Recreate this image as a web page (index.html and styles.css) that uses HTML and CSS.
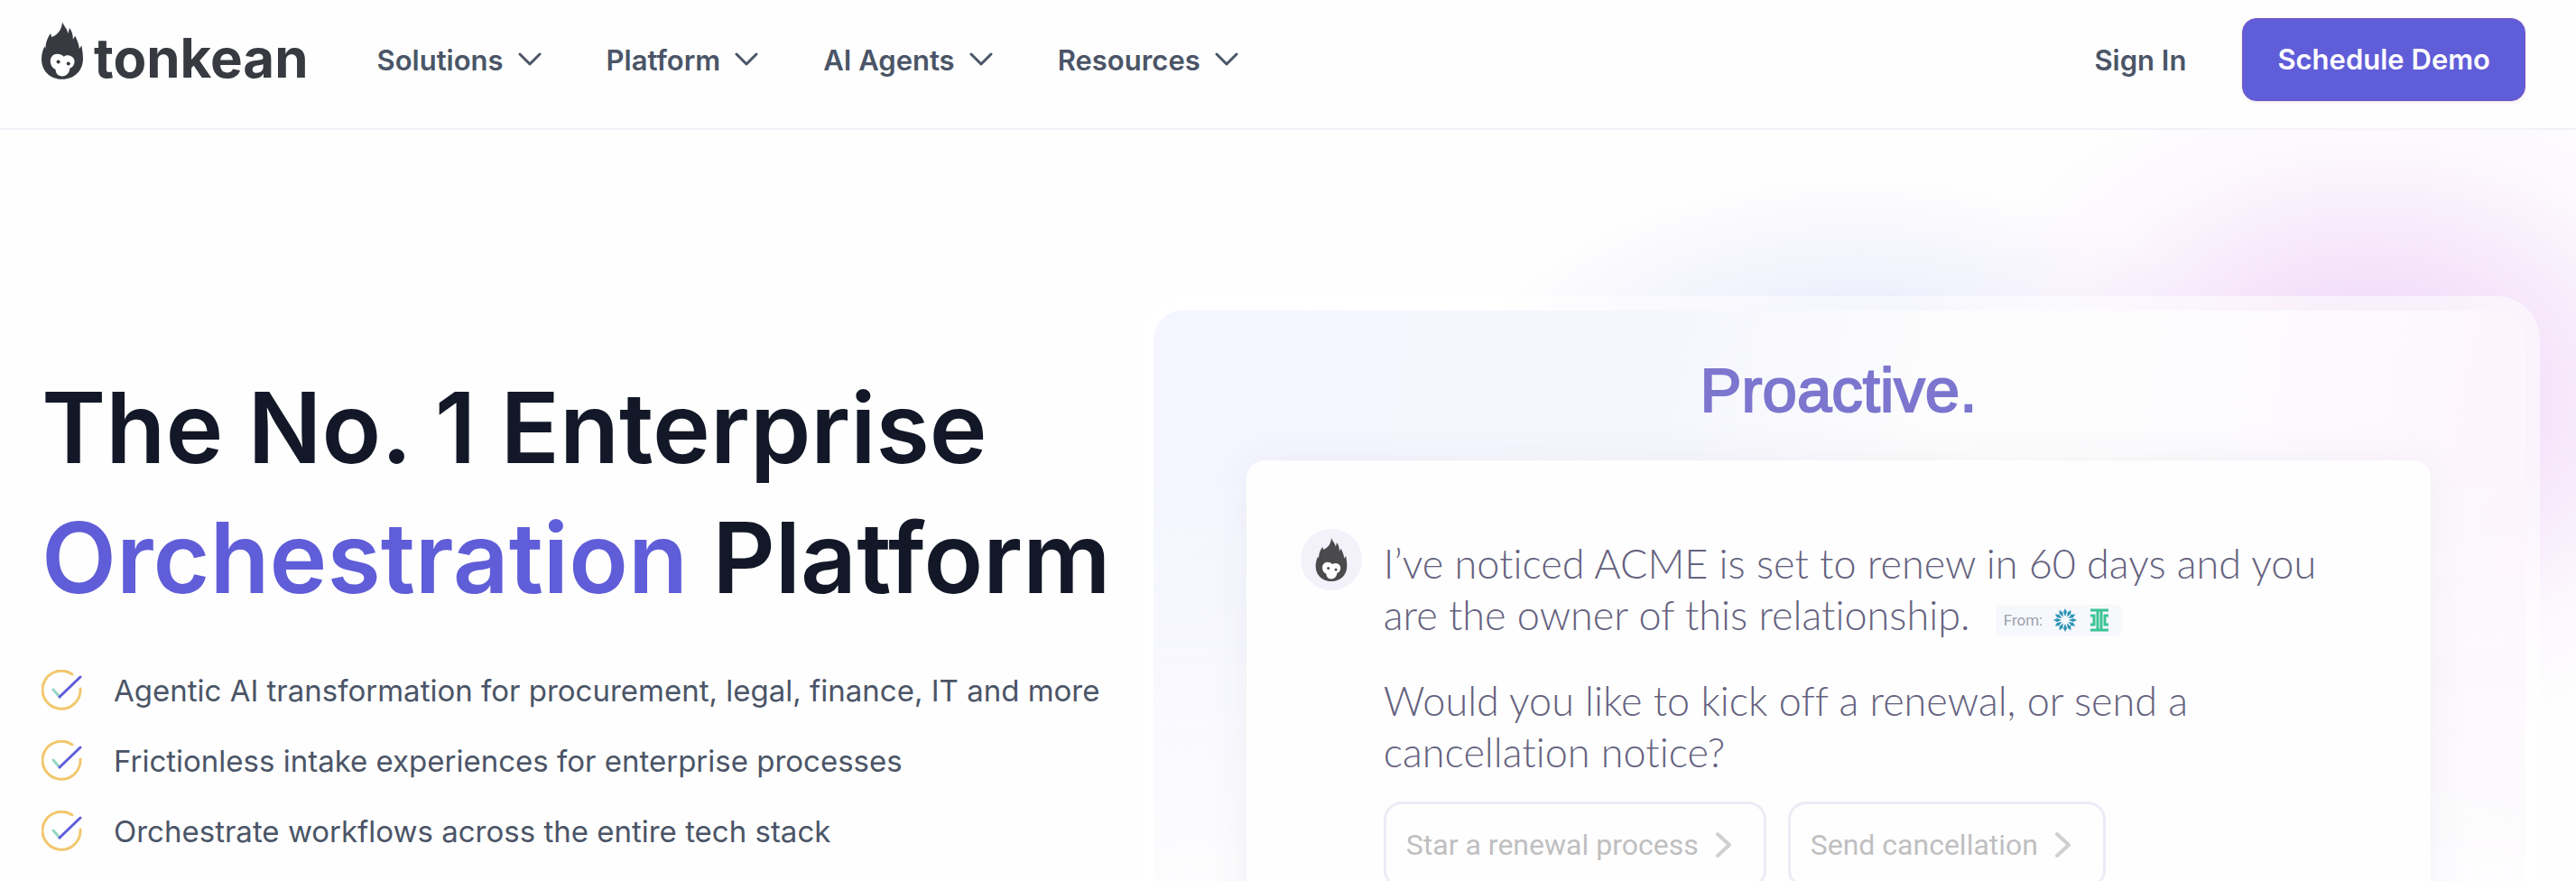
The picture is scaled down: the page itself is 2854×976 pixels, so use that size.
FILE: index.html
```
<!DOCTYPE html>
<html lang="en">
<head>
    <meta charset="UTF-8">
    <meta name="viewport" content="width=device-width, initial-scale=1.0">
    <title>Tonkean</title>
    <link rel="stylesheet" href="styles.css">
</head>
<body>
    <!-- Shared icons -->
    <svg class="sprite" aria-hidden="true">
        <symbol id="flame" viewBox="0 0 136 188">
            <path fill="currentColor" d="M68 0C72 12 83 20 87 38L92 20C99 30 104 44 103 58L110 46C116 58 122 72 124 88L132 77C132 90 136 98 136 120C136 160 108 188 68 188C28 188 0 160 0 122C0 104 5 92 10 80L13 88C14 66 20 52 30 38L33 50C44 46 52 40 60 28C66 18 67 10 68 0Z"/>
            <path fill="#fff" d="M52 105C62 105 69 109 73 114C79 110 84 109 90 110C102 112 109 121 108 132C107 143 101 150 93 152C91 168 82 178 68 178C54 178 46 168 46 156C36 152 29 142 29 129C29 115 38 105 52 105Z"/>
            <circle cx="55" cy="131" r="6" fill="currentColor"/>
            <circle cx="88" cy="137" r="6" fill="currentColor"/>
        </symbol>
        <symbol id="chevron-down" viewBox="0 0 26 16">
            <path d="M2 2L13 13L24 2" fill="none" stroke="currentColor" stroke-width="3" stroke-linecap="round" stroke-linejoin="round"/>
        </symbol>
        <symbol id="chevron-right" viewBox="0 0 20 30">
            <path d="M3 3L16 15L3 27" fill="none" stroke="currentColor" stroke-width="4" stroke-linecap="round" stroke-linejoin="round"/>
        </symbol>
        <symbol id="check" viewBox="0 0 46 46">
            <path d="M34 5A21 21 0 1 0 43 21" fill="none" stroke="#f2c76e" stroke-width="3" stroke-linecap="round"/>
            <path d="M13 22L20 30" fill="none" stroke="#94d6c8" stroke-width="3" stroke-linecap="round"/>
            <path d="M20 30L43 8" fill="none" stroke="#605dd8" stroke-width="3" stroke-linecap="round"/>
        </symbol>
    </svg>

    <header class="header">
        <a class="logo" href="#">
            <svg class="logo-mark"><use href="#flame"/></svg>
            <span class="logo-name">tonkean</span>
        </a>
        <nav class="nav">
            <button class="nav-item">Solutions <svg class="nav-arrow"><use href="#chevron-down"/></svg></button>
            <button class="nav-item">Platform <svg class="nav-arrow"><use href="#chevron-down"/></svg></button>
            <button class="nav-item">AI Agents <svg class="nav-arrow"><use href="#chevron-down"/></svg></button>
            <button class="nav-item">Resources <svg class="nav-arrow"><use href="#chevron-down"/></svg></button>
        </nav>
        <div class="actions">
            <a class="sign-in" href="#">Sign In</a>
            <a class="demo-button" href="#">Schedule Demo</a>
        </div>
    </header>

    <main class="hero">
        <section class="intro">
            <h1 class="title">The No. 1 Enterprise <span class="accent">Orchestration</span> Platform</h1>
            <ul class="benefits">
                <li class="benefit"><svg class="check"><use href="#check"/></svg>Agentic AI transformation for procurement, legal, finance, IT and more</li>
                <li class="benefit"><svg class="check"><use href="#check"/></svg>Frictionless intake experiences for enterprise processes</li>
                <li class="benefit"><svg class="check"><use href="#check"/></svg>Orchestrate workflows across the entire tech stack</li>
            </ul>
        </section>

        <section class="glass">
            <div class="demo">
                <h2 class="demo-title">Proactive.</h2>
                <div class="chat">
                    <div class="avatar"><svg class="avatar-mark"><use href="#flame"/></svg></div>
                    <div class="message">
                        <p class="line">I’ve noticed ACME is set to renew in 60 days and you<br>are the owner of this relationship.
                            <span class="source">From:
                                <svg class="source-icon" viewBox="0 0 26 26" fill="#2f93b5">
                                    <g id="rays">
                                        <path d="M13 9L11 4L13 0L15 4Z"/>
                                        <path d="M13 9L11 4L13 0L15 4Z" transform="rotate(90 13 13)"/>
                                        <path d="M13 9L11 4L13 0L15 4Z" transform="rotate(180 13 13)"/>
                                        <path d="M13 9L11 4L13 0L15 4Z" transform="rotate(270 13 13)"/>
                                    </g>
                                    <use href="#rays" transform="rotate(30 13 13)"/>
                                    <use href="#rays" transform="rotate(60 13 13)"/>
                                </svg>
                                <svg class="source-icon" viewBox="0 0 26 26">
                                    <path d="M3 2H23M3 24H23M11 2V24M15 2V24M3 8H7V18H3M23 8H19V18H23" fill="none" stroke="#3cc495" stroke-width="3"/>
                                </svg>
                            </span>
                        </p>
                        <p class="line">Would you like to kick off a renewal, or send a<br>cancellation notice?</p>
                        <div class="choices">
                            <button class="choice">Star a renewal process <svg class="choice-arrow"><use href="#chevron-right"/></svg></button>
                            <button class="choice">Send cancellation <svg class="choice-arrow"><use href="#chevron-right"/></svg></button>
                        </div>
                    </div>
                </div>
            </div>
        </section>
    </main>
</body>
</html>
```
FILE: styles.css
```
* {
    box-sizing: border-box;
}
body {
    margin: 0;
    height: 100vh;
    display: flex;
    flex-direction: column;
    overflow: hidden;
    background: #fefefe;
    color: #4b5567;
    font-family: Inter, sans-serif;
}
h1, h2, p, ul {
    margin: 0;
    padding: 0;
}
a {
    color: inherit;
    text-decoration: none;
}
button {
    background: none;
    border: none;
    padding: 0;
    color: inherit;
    font: inherit;
    cursor: pointer;
}
.sprite {
    display: none;
}

/* Header */
.header {
    display: flex;
    align-items: center;
    padding: 20px 56px 30px 46px;
    border-bottom: 2px solid #f1f1f8;
    font-size: 31px;
    font-weight: 600;
}
.logo {
    display: flex;
    align-self: flex-start;
    gap: 12px;
    margin-right: 76px;
    padding-top: 4px;
    color: #373a40;
}
.logo-mark {
    width: 46px;
    height: 64px;
}
.logo-name {
    padding-top: 8px;
    font-size: 60px;
    font-weight: 700;
    line-height: 64px;
}
.nav {
    display: flex;
    gap: 72px;
}
.nav-item {
    display: flex;
    align-items: center;
    gap: 16px;
}
.nav-arrow {
    width: 26px;
    height: 16px;
}
.actions {
    display: flex;
    align-items: center;
    gap: 62px;
    margin-left: auto;
}
.demo-button {
    padding: 0 38px;
    line-height: 90px;
    border: 1px solid #7a55c8;
    border-radius: 16px;
    background: #605dd8;
    box-shadow: 0 2px 4px rgba(16, 24, 40, 0.06);
    color: #fff;
}

/* Hero, with the two soft glows behind the card */
.hero {
    flex: 1;
    min-height: 0;
    display: grid;
    grid-template-columns: 47fr 60fr;
    align-items: start;
    padding: 184px 40px 0 46px;
    background:
        radial-gradient(480px 380px at 92% 300px, rgba(240, 214, 248, 0.9) 0%, rgba(240, 214, 248, 0.8) 30%, rgba(243, 220, 250, 0.5) 55%, rgba(250, 235, 252, 0.3) 75%, rgba(255, 255, 255, 0) 100%),
        radial-gradient(440px 260px at 72% 310px, #dfe2fa 0%, #e6e8fb 35%, rgba(238, 239, 252, 0.8) 55%, rgba(255, 255, 255, 0) 100%);
}
.intro {
    padding-top: 74px;
}
.title {
    color: #121827;
    font-size: 108px;
    font-weight: 600;
    line-height: 144px;
}
.accent {
    color: #605dd8;
}
.benefits {
    display: flex;
    flex-direction: column;
    gap: 24px;
    margin-top: 48px;
    list-style: none;
}
.benefit {
    display: flex;
    align-items: center;
    gap: 34px;
    font-size: 33px;
    line-height: 54px;
}
.check {
    width: 46px;
    height: 46px;
}

/* Product card */
.glass {
    padding: 16px;
    border-radius: 48px;
    background: rgba(255, 255, 255, 0.55);
}
.demo {
    padding: 50px 105px 120px 103px;
    border-radius: 32px;
    background:
        linear-gradient(to bottom, rgba(253, 253, 253, 0) 20%, #fdfdfe 80%),
        linear-gradient(100deg, #f4f5ff 0%, #f6f7fd 35%, #fdfdfd 55%, #fdfbfe 75%, #fcf3fb 100%);
}
.demo-title {
    color: #7c76cf;
    font-family: "Liberation Sans", sans-serif;
    font-size: 69px;
    font-weight: 400;
    line-height: 78px;
    text-align: center;
    -webkit-text-stroke: 2px #7c76cf;
}
.chat {
    display: flex;
    gap: 24px;
    margin-top: 38px;
    padding: 76px 60px 80px;
    border-radius: 20px;
    background: #fefefe;
    box-shadow: 0 0 48px rgba(60, 60, 100, 0.06);
}
.avatar {
    display: flex;
    flex: none;
    align-items: center;
    justify-content: center;
    width: 68px;
    height: 68px;
    border-radius: 50%;
    background: #f3f2fb;
    color: #4a4a4c;
}
.avatar-mark {
    width: 36px;
    height: 48px;
}
.message {
    padding-top: 10px;
    white-space: nowrap;
}
.line {
    margin-bottom: 38px;
    color: #65627f;
    font-family: Lato, sans-serif;
    font-size: 45px;
    font-weight: 300;
    font-variant-ligatures: no-common-ligatures;
    line-height: 57px;
}
.line:nth-of-type(2) {
    margin-bottom: 26px;
}
.source {
    display: inline-flex;
    align-items: center;
    gap: 12px;
    height: 34px;
    margin-left: 16px;
    padding: 0 12px 0 9px;
    border-radius: 6px;
    background: #f6f8fc;
    color: #9da1ad;
    font-family: Roboto, sans-serif;
    font-size: 17px;
    font-weight: 400;
    line-height: 34px;
    vertical-align: middle;
}
.source-icon {
    width: 26px;
    height: 26px;
}
.choices {
    display: flex;
    gap: 24px;
}
.choice {
    display: flex;
    align-items: center;
    gap: 18px;
    height: 96px;
    padding: 0 34px 0 22px;
    border: 3px solid #ecebf6;
    border-radius: 20px;
    color: #bfbfc1;
    font-family: Roboto, sans-serif;
    font-size: 32px;
}
.choice-arrow {
    width: 20px;
    height: 30px;
    color: #d0d0d3;
}
```
